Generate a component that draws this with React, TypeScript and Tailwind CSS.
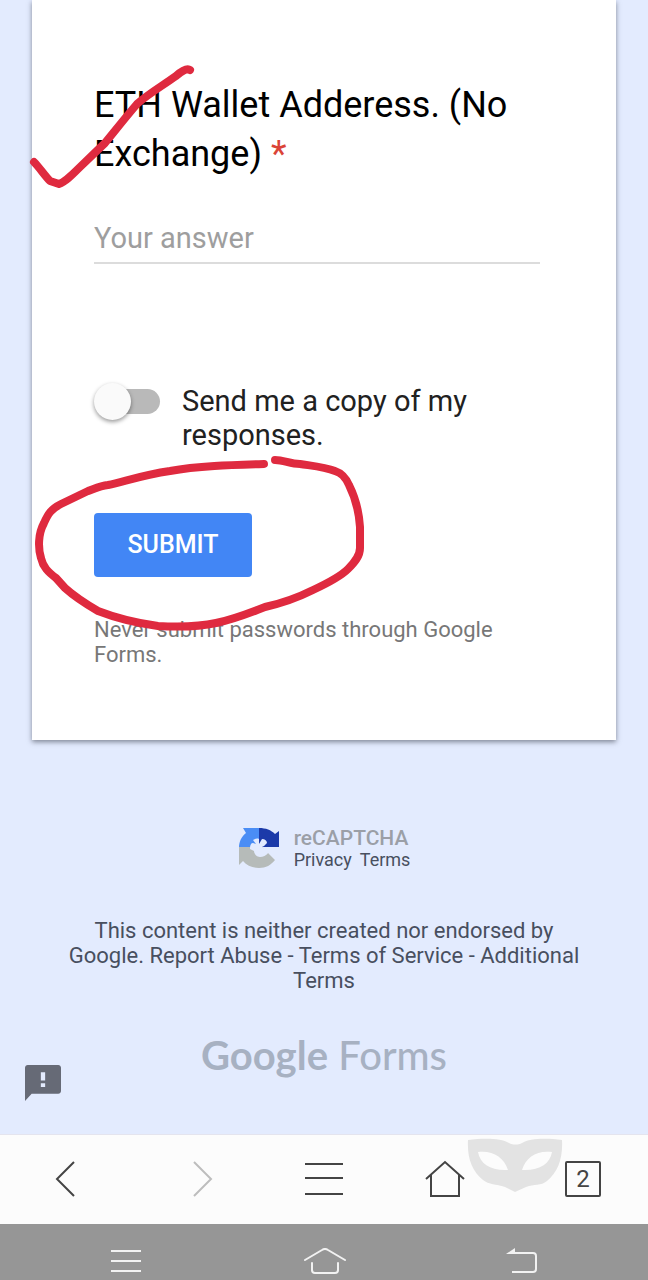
import { useState } from "react";

const PenMarks = () => (
  <svg
    className="pointer-events-none absolute left-0 top-0 z-10"
    width="380"
    height="640"
    viewBox="0 0 380 640"
    fill="none"
    stroke="#df2a3f"
    strokeLinecap="round"
    strokeLinejoin="round"
    aria-hidden="true"
  >
    <path
      strokeWidth="8"
      d="M34 162C39 167 45 176 50 181L59 184C65 182 71 176 79 168L105 143C114 132 125 118 137 104C148 94 162 86 176 76Q186 67 190 70"
    />
    <path
      strokeWidth="8"
      d="M264 464C230 465 197 466 170 471C143 475 126 481 108 485C99 486 92 490 88 491L61 504C51 509 48 514 44 523C38 534 38 548 41 558C43 567 48 572 56 578L65 588C75 597 86 604 98 611C116 618 136 623 158 626C177 627 198 627 216 623C235 619 249 613 265 607C283 603 297 598 313 590C328 583 341 576 348 569C355 562 360 556 360 548V527C359 511 355 497 349 485C345 476 341 473 335 471C325 467 313 466 300 464C290 464 284 460 275 460"
    />
  </svg>
);

const RecaptchaIcon = () => (
  <svg width="42" height="42" viewBox="0 0 42 42" aria-hidden="true">
    <path fill="#1c3aa9" d="M21 1C28 1 33 3 37 7L41 4V20H21Z" />
    <path fill="#4a8df5" d="M21 1H5L8 6C3 10 1 15 1 21H21Z" />
    <path fill="#b6bbb9" d="M1 20V38L5 34C9 39 15 41 21 41C28 41 33 38 37 33L30 26L24 20Z" />
    <path
      fill="#e3ebfe"
      d="M12 21C12 18 13 16 15 16L18 17L15 13C17 12 19 11 21 12V17L24 12C27 12 29 14 29 16L26 19L24 20L31 25C28 29 25 30 22 30C19 30 16 27 16 24L12 22Z"
    />
  </svg>
);

const FeedbackIcon = () => (
  <svg width="36" height="36" viewBox="2 2 20 20" aria-hidden="true">
    <path
      fill="#666a76"
      d="M20.5 2h-17C2.7 2 2 2.7 2 3.5V22l3.7-4h14.8c.8 0 1.5-.7 1.5-1.5v-13c0-.8-.7-1.5-1.5-1.5zM13.2 14.2h-2.4v-2.1h2.4v2.1zm0-3.6h-2.4V6h2.4v4.6z"
    />
  </svg>
);

const MaskIcon = () => (
  <svg width="96" height="54" viewBox="0 0 96 54" aria-hidden="true">
    <path
      fill="#e3e3e3"
      fillRule="evenodd"
      d="M1 2C17 0 34 0 42 5C46 7 51 7 55 5C63 0 80 0 95 2C96 20 91 34 80 43C74 48 67 46 59 49L48 54L38 49C29 46 22 47 16 42C5 33 0 20 1 2ZM11 14C13 26 24 33 41 32C37 19 25 12 11 14ZM85 14C70 12 59 19 55 32C72 33 83 26 85 14Z"
    />
  </svg>
);

const App = () => {
  const [sendCopy, setSendCopy] = useState(false);

  return (
    <div className="relative min-h-screen bg-[#e3ebfe] font-['Roboto',sans-serif]">
      <PenMarks />

      <main className="mx-8 bg-white pb-[73px] pl-[62px] pr-[76px] pt-[81px] shadow-[0_2px_5px_rgba(60,65,80,0.6)]">
        <form onSubmit={(e) => e.preventDefault()}>
          <label htmlFor="wallet" className="block text-[36px] leading-[49px] text-black">
            ETH Wallet Adderess. (No Exchange) <span className="text-[#db4437]">*</span>
          </label>
          <input
            id="wallet"
            type="text"
            placeholder="Your answer"
            className="mt-[35px] block h-[50px] w-full border-b-2 border-[#dcdcdc] text-[29px] text-[#212121] outline-none placeholder:text-[#9e9e9e]"
          />

          <label className="mt-[120px] flex gap-[22px]">
            <input
              type="checkbox"
              role="switch"
              className="peer sr-only"
              checked={sendCopy}
              onChange={(e) => setSendCopy(e.target.checked)}
            />
            <span className="flex h-[34px] w-[66px] shrink-0 items-center rounded-full peer-checked:flex-row-reverse">
              <span className="z-1 -mr-[18px] h-[37px] w-[37px] shrink-0 rounded-full bg-[#fafafa] shadow-[0_2px_4px_rgba(0,0,0,0.4)]"></span>
              <span className="h-[25px] grow rounded-full bg-[#b9b9b9]"></span>
            </span>
            <span className="text-[29px] leading-[34px] text-[#212121]">
              Send me a copy of my responses.
            </span>
          </label>

          <button
            type="submit"
            className="mt-[61px] block h-16 w-[158px] rounded bg-[#4286f5] text-[25px] font-medium text-white"
          >
            SUBMIT
          </button>
        </form>
        <p className="mt-10 text-[22px] leading-[25px] text-[#777777]">
          Never submit passwords through Google Forms.
        </p>
      </main>

      <footer className="relative h-[394px] pt-[86px] text-[#484f5f]">
        <div className="flex items-center justify-center gap-[14px]">
          <RecaptchaIcon />
          <div>
            <div className="text-[21px] font-medium leading-6 text-[#9b9fa7]">reCAPTCHA</div>
            <div className="flex gap-2 text-[18px] leading-5">
              <a href="#privacy">Privacy</a>
              <a href="#terms">Terms</a>
            </div>
          </div>
        </div>
        <p className="mx-auto mt-12 max-w-[520px] text-center text-[22px] leading-[25px]">
          This content is neither created nor endorsed by Google. <a href="#abuse">Report Abuse</a> -{" "}
          <a href="#tos">Terms of Service</a> - <a href="#additional">Additional Terms</a>
        </p>
        <div className="mt-9 text-center font-['Lato',sans-serif] text-[40px] leading-[52px] text-[#a7b1c2]">
          <span className="font-bold">Google</span> <span className="font-medium">Forms</span>
        </div>
        <button type="button" aria-label="Report a problem" className="absolute bottom-[33px] left-[25px]">
          <FeedbackIcon />
        </button>
      </footer>

      {/* Browser toolbar */}
      <nav className="relative grid h-[90px] grid-cols-[130fr_146fr_96fr_146fr_130fr] items-center justify-items-center border-t border-[#e4e4ee] bg-[#fcfcfc] pb-0.5">
        <button type="button" aria-label="Back">
          <svg width="20" height="38" viewBox="0 0 20 38" fill="none" stroke="#444" strokeWidth="2">
            <path d="M19 2L2 19L19 36" />
          </svg>
        </button>
        <button type="button" aria-label="Forward">
          <svg width="20" height="38" viewBox="0 0 20 38" fill="none" stroke="#bdbdbd" strokeWidth="2">
            <path d="M1 2L18 19L1 36" />
          </svg>
        </button>
        <button type="button" aria-label="Menu">
          <svg width="40" height="34" viewBox="0 0 40 34" fill="none" stroke="#444" strokeWidth="2">
            <path d="M1 2H39M1 16H39M1 32H39" />
          </svg>
        </button>
        <button type="button" aria-label="Home">
          <svg width="40" height="38" viewBox="0 0 40 38" fill="none" stroke="#444" strokeWidth="2">
            <path d="M1 19L20 2L39 19M6 15V36H34V15" />
          </svg>
        </button>
        <button
          type="button"
          aria-label="Open tabs"
          className="h-9 w-9 rounded-xs border-2 border-[#444] text-[24px] leading-8 text-[#444]"
        >
          2
        </button>
        <div className="absolute right-[85px] top-[3px]">
          <MaskIcon />
        </div>
      </nav>

      {/* System keys */}
      <div className="grid h-14 grid-cols-[252fr_146fr_250fr] justify-items-center bg-[#969696] pt-6">
        <button type="button" aria-label="Recent apps" className="h-7">
          <svg width="32" height="28" viewBox="0 0 32 28" fill="none" stroke="#f2f2f2" strokeWidth="2">
            <path d="M1 3H31M1 13H31M1 23H31" />
          </svg>
        </button>
        <button type="button" aria-label="Home screen" className="h-7">
          <svg width="42" height="28" viewBox="0 0 42 28" fill="none" stroke="#f2f2f2" strokeWidth="2" strokeLinecap="round">
            <path d="M1 12L18 2Q21 0 24 2L41 12M8 15V22Q8 25 11 25H31Q34 25 34 22V15" />
          </svg>
        </button>
        <button type="button" aria-label="System back" className="h-7">
          <svg width="34" height="28" viewBox="0 0 34 28" fill="none" stroke="#f2f2f2" strokeWidth="2">
            <path d="M4 5H27Q30 5 30 8V21Q30 24 27 24H6" />
            <path d="M0 6L9 0V6Z" fill="#f2f2f2" stroke="none" />
          </svg>
        </button>
      </div>
    </div>
  );
};

export default App;
